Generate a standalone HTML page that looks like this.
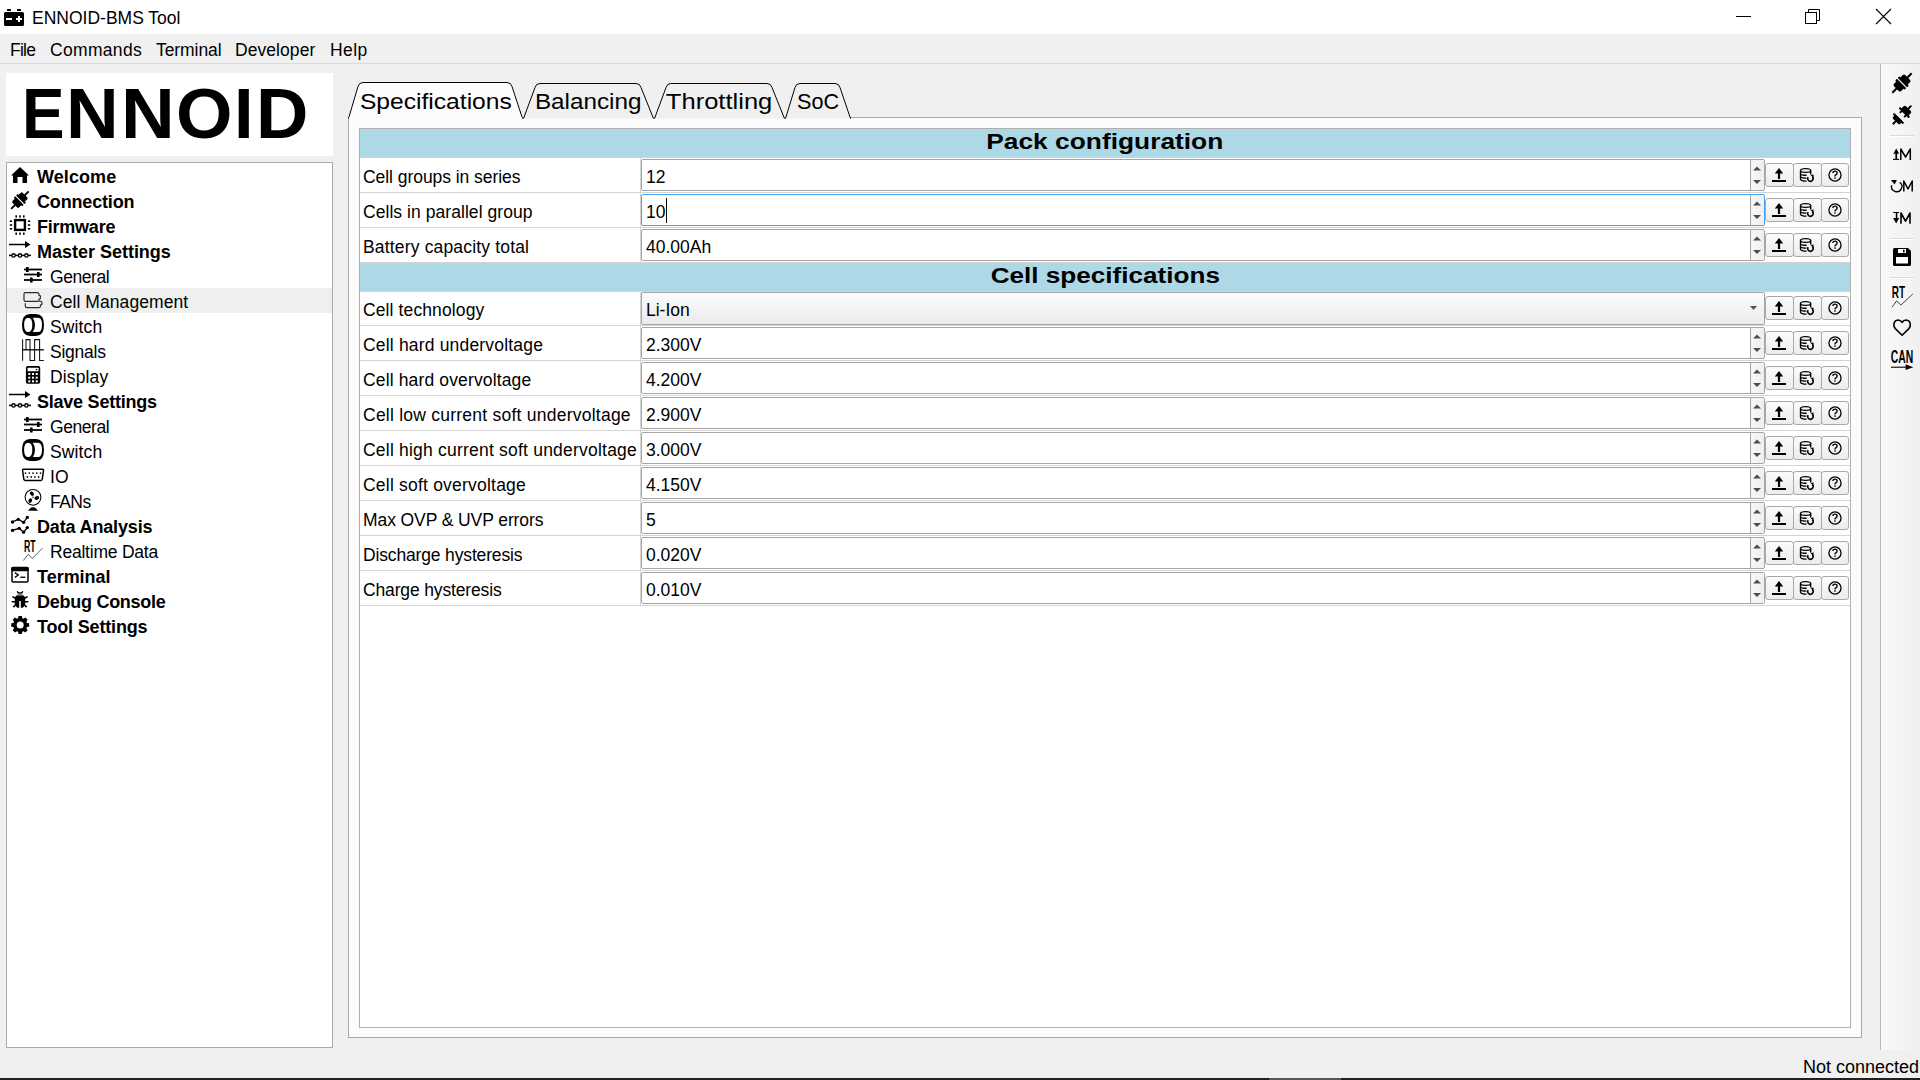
<!DOCTYPE html><html><head><meta charset="utf-8"><title>ENNOID-BMS Tool</title><style>
*{box-sizing:border-box}
html,body{margin:0;padding:0}
body{width:1920px;height:1080px;overflow:hidden;background:#f0f0f0;font-family:"Liberation Sans", sans-serif;color:#000;position:relative}
.a{position:absolute}
.t{position:absolute;white-space:pre;font-size:17.5px;line-height:20px;height:20px}
.b{font-weight:bold;font-size:18px}
svg{position:absolute;overflow:visible}
.btn{position:absolute;width:27px;height:24px;border:1px solid #a9a9a9;border-radius:3px;background:linear-gradient(#fbfbfb,#ececec)}
.spin{position:absolute;left:641px;width:1124px;height:32px;border:1px solid #a6a6a6;border-radius:2px;background:#fff}
.spinbtn{position:absolute;right:0;top:0;bottom:0;width:14px;border-left:1px solid #a6a6a6;background:linear-gradient(90deg,#f7f7f7,#efefef);border-radius:0 2px 2px 0}
.grid{position:absolute;background:#d4d4d4}
.hdr{position:absolute;left:360px;width:1490px;background:#add8e6;text-align:center;font-weight:bold;font-size:22px;letter-spacing:2px;white-space:pre}
</style></head><body>
<div class="a" style="left:0;top:0;width:1920px;height:34px;background:#fff"></div>
<svg style="left:0;top:0" width="30" height="34" viewBox="0 0 30 34">
<rect x="7" y="9" width="4" height="2" rx="0.6" fill="#000"/><rect x="17" y="9" width="4" height="2" rx="0.6" fill="#000"/>
<rect x="4" y="12" width="20" height="14" rx="1.6" fill="#000"/>
<rect x="6" y="18" width="6" height="2" fill="#fff"/><rect x="16" y="18" width="6" height="2" fill="#fff"/><rect x="18" y="16" width="2" height="6" fill="#fff"/>
</svg>
<div class="t " style="left:32px;top:8px;font-size:17.5px">ENNOID-BMS Tool</div>
<svg style="left:1700px;top:0" width="220" height="34" viewBox="1700 0 220 34">
<line x1="1736" y1="16.5" x2="1751" y2="16.5" stroke="#000" stroke-width="1"/>
<rect x="1805.5" y="12.5" width="11" height="11" fill="none" stroke="#000" stroke-width="1"/>
<path d="M1808.5 12.5 V9.5 H1819.5 V20.5 H1816.5" fill="none" stroke="#000" stroke-width="1"/>
<path d="M1876 9 L1891 24 M1891 9 L1876 24" stroke="#000" stroke-width="1.1"/>
</svg>
<div class="a" style="left:0;top:63px;width:1920px;height:1px;background:#d9d9d9"></div>
<div class="t " style="left:10px;top:40px;letter-spacing:-0.75px">File</div>
<div class="t " style="left:50px;top:40px;letter-spacing:0.32px">Commands</div>
<div class="t " style="left:156px;top:40px;letter-spacing:-0.07px">Terminal</div>
<div class="t " style="left:235px;top:40px;letter-spacing:0.06px">Developer</div>
<div class="t " style="left:330px;top:40px;letter-spacing:0.42px">Help</div>
<div class="a" style="left:6px;top:73px;width:327px;height:83px;background:#fff"></div>
<div class="a" style="left:22.20px;top:78px;font-weight:bold;font-size:71px;line-height:71px;white-space:pre;transform:scaleX(0.898);transform-origin:0 0">E</div>
<div class="a" style="left:65.77px;top:78px;font-weight:bold;font-size:71px;line-height:71px;white-space:pre;transform:scaleX(1.027);transform-origin:0 0">N</div>
<div class="a" style="left:120.56px;top:78px;font-weight:bold;font-size:71px;line-height:71px;white-space:pre;transform:scaleX(1.048);transform-origin:0 0">N</div>
<div class="a" style="left:175.83px;top:78px;font-weight:bold;font-size:71px;line-height:71px;white-space:pre;transform:scaleX(1.022);transform-origin:0 0">O</div>
<div class="a" style="left:234.15px;top:78px;font-weight:bold;font-size:71px;line-height:71px;white-space:pre;transform:scaleX(0.990);transform-origin:0 0">I</div>
<div class="a" style="left:256.20px;top:78px;font-weight:bold;font-size:71px;line-height:71px;white-space:pre;transform:scaleX(1.021);transform-origin:0 0">D</div>
<div class="a" style="left:6px;top:162px;width:327px;height:886px;border:1px solid #ababab;background:#fff"></div>
<div class="a" style="left:7px;top:288px;width:325px;height:25px;background:#efefef"></div>
<div class="t b" style="left:37px;top:167px;letter-spacing:0.083px">Welcome</div>
<div class="t b" style="left:37px;top:192px;letter-spacing:-0.167px">Connection</div>
<div class="t b" style="left:37px;top:217px;letter-spacing:-0.229px">Firmware</div>
<div class="t b" style="left:37px;top:242px;letter-spacing:-0.014px">Master Settings</div>
<div class="t " style="left:50px;top:267px;letter-spacing:-0.45px">General</div>
<div class="t " style="left:50px;top:292px;letter-spacing:0.071px">Cell Management</div>
<div class="t " style="left:50px;top:317px;letter-spacing:0.12px">Switch</div>
<div class="t " style="left:50px;top:342px;letter-spacing:-0.233px">Signals</div>
<div class="t " style="left:50px;top:367px;letter-spacing:0.133px">Display</div>
<div class="t b" style="left:37px;top:392px;letter-spacing:-0.238px">Slave Settings</div>
<div class="t " style="left:50px;top:417px;letter-spacing:-0.45px">General</div>
<div class="t " style="left:50px;top:442px;letter-spacing:0.12px">Switch</div>
<div class="t " style="left:50px;top:467px;letter-spacing:0.1px">IO</div>
<div class="t " style="left:50px;top:492px;letter-spacing:-0.533px">FANs</div>
<div class="t b" style="left:37px;top:517px;letter-spacing:-0.158px">Data Analysis</div>
<div class="t " style="left:50px;top:542px;letter-spacing:-0.225px">Realtime Data</div>
<div class="t b" style="left:37px;top:567px;letter-spacing:-0.014px">Terminal</div>
<div class="t b" style="left:37px;top:592px;letter-spacing:-0.267px">Debug Console</div>
<div class="t b" style="left:37px;top:617px;letter-spacing:-0.175px">Tool Settings</div>
<svg style="left:0;top:0" width="340" height="1080" viewBox="0 0 340 1080"><g transform="translate(0,0)"><path d="M11 175.5 L20 167 L29 175.5 L27 175.5 L27 183 L22.5 183 L22.5 177 L17.5 177 L17.5 183 L13 183 L13 175.5 Z" fill="#000"/></g><g transform="translate(0,0)"><g transform="translate(19.9,200.1) rotate(45) scale(1.0)" fill="#000"><rect x="-6" y="-2.7" width="12" height="2.1" rx="0.4"/><rect x="-4.6" y="-7.2" width="9.2" height="6" rx="1.6"/><rect x="-0.95" y="-12.4" width="1.9" height="6"/><rect x="-6" y="0.6" width="12" height="2.1" rx="0.4"/><rect x="-4.6" y="1.2" width="9.2" height="6" rx="1.6"/><rect x="-0.95" y="6.4" width="1.9" height="6"/></g></g><g transform="translate(0,0)"><rect x="15.1" y="220.1" width="9.8" height="9.8" fill="none" stroke="#000" stroke-width="2.4"/><rect x="15.399999999999999" y="215.3" width="1.6" height="2.3" fill="#000"/><rect x="15.399999999999999" y="232.5" width="1.6" height="2.3" fill="#000"/><rect x="19.2" y="215.3" width="1.6" height="2.3" fill="#000"/><rect x="19.2" y="232.5" width="1.6" height="2.3" fill="#000"/><rect x="23.0" y="215.3" width="1.6" height="2.3" fill="#000"/><rect x="23.0" y="232.5" width="1.6" height="2.3" fill="#000"/><rect x="9.8" y="220.39999999999998" width="2.3" height="1.6" fill="#000"/><rect x="27.9" y="220.39999999999998" width="2.3" height="1.6" fill="#000"/><rect x="9.8" y="224.2" width="2.3" height="1.6" fill="#000"/><rect x="27.9" y="224.2" width="2.3" height="1.6" fill="#000"/><rect x="9.8" y="228.0" width="2.3" height="1.6" fill="#000"/><rect x="27.9" y="228.0" width="2.3" height="1.6" fill="#000"/></g><g stroke="#000" fill="none" stroke-width="1.5"><path d="M9 244.5 H28"/><path d="M9 255.4 H31"/></g><path d="M25 241 L30.5 244.5 L25 248 Z" fill="#000"/><circle cx="13.55" cy="255.4" r="1.65" fill="#fff" stroke="#000" stroke-width="1.35"/><circle cx="20" cy="255.4" r="1.65" fill="#fff" stroke="#000" stroke-width="1.35"/><circle cx="26.4" cy="255.4" r="1.65" fill="#fff" stroke="#000" stroke-width="1.35"/><g transform="translate(0,0)"><g stroke="#000" stroke-width="1.8"><line x1="24" y1="269.5" x2="42" y2="269.5"/><line x1="24" y1="274.5" x2="42" y2="274.5"/><line x1="24" y1="280" x2="42" y2="280"/></g><g fill="#000"><rect x="26" y="267" width="2.6" height="5"/><rect x="37" y="272" width="2.6" height="5"/><rect x="30" y="277.5" width="2.6" height="5"/></g></g><g transform="translate(0,0)"><g fill="none" stroke="#2a2a2a" stroke-width="1.15" stroke-linejoin="round"><path d="M25.2 292.6 H37.6 Q38.6 292.6 39 293.8 V295.4 L40.4 295.9 V298.6 L39 299.1 V300.2 Q39 301.3 37.8 301.3 H25.2 Q24 301.3 24 300.1 V293.8 Q24 292.6 25.2 292.6 Z"/><path d="M39.2 300.8 L41.9 302 V304.4 L40.4 305 V306.5 Q40.2 307.6 39 307.6 H26.8 Q25.3 307.6 25.3 306.2 V303.2"/></g></g><g transform="translate(0,0)"><path d="M30 314 H36 Q44 314 44 325 Q44 336 36 336 H30 Q22 336 22 325 Q22 314 30 314 Z M28.2 317.8 Q24.1 317.8 24.1 324.9 Q24.1 332 28.2 332 Q32.3 332 32.3 324.9 Q32.3 317.8 28.2 317.8 Z M32.8 317.8 Q35 321 35 324.9 Q35 328.8 32.8 332 H38 Q42 332 42 324.9 Q42 317.8 38 317.8 Z" fill="#000" fill-rule="evenodd"/></g><g transform="translate(0,0)"><g fill="none" stroke="#111" stroke-width="1.05"><path d="M22.6 339.3 V360.8"/><path d="M26 349.8 V339.6 H30 V360.4 H34.6 V339.6 H39.6 V360.4 H43.8"/></g><path d="M22.6 349.8 H43.8" stroke="#000" stroke-width="1.3"/></g><g transform="translate(0,0)"><rect x="25.9" y="365.9" width="14.3" height="17.9" rx="1.8" fill="#000"/><rect x="27.6" y="367.7" width="11" height="3.6" rx="0.5" fill="#fff"/><circle cx="36.5" cy="369.5" r="0.8" fill="#000"/><rect x="28.3" y="373" width="2" height="2" fill="#fff"/><rect x="28.3" y="376.7" width="2" height="2" fill="#fff"/><rect x="28.3" y="380.3" width="2" height="2" fill="#fff"/><rect x="32" y="373" width="2" height="2" fill="#fff"/><rect x="32" y="376.7" width="2" height="2" fill="#fff"/><rect x="32" y="380.3" width="2" height="2" fill="#fff"/><rect x="35.7" y="373" width="2" height="2" fill="#fff"/><rect x="35.7" y="376.7" width="2" height="2" fill="#fff"/><rect x="35.7" y="380.3" width="2" height="2" fill="#fff"/></g><g stroke="#000" fill="none" stroke-width="1.5"><path d="M9 394.5 H28"/><path d="M9 405.4 H31"/></g><path d="M25 391 L30.5 394.5 L25 398 Z" fill="#000"/><circle cx="13.55" cy="405.4" r="1.65" fill="#fff" stroke="#000" stroke-width="1.35"/><circle cx="20" cy="405.4" r="1.65" fill="#fff" stroke="#000" stroke-width="1.35"/><circle cx="26.4" cy="405.4" r="1.65" fill="#fff" stroke="#000" stroke-width="1.35"/><g transform="translate(0,150)"><g stroke="#000" stroke-width="1.8"><line x1="24" y1="269.5" x2="42" y2="269.5"/><line x1="24" y1="274.5" x2="42" y2="274.5"/><line x1="24" y1="280" x2="42" y2="280"/></g><g fill="#000"><rect x="26" y="267" width="2.6" height="5"/><rect x="37" y="272" width="2.6" height="5"/><rect x="30" y="277.5" width="2.6" height="5"/></g></g><g transform="translate(0,125)"><path d="M30 314 H36 Q44 314 44 325 Q44 336 36 336 H30 Q22 336 22 325 Q22 314 30 314 Z M28.2 317.8 Q24.1 317.8 24.1 324.9 Q24.1 332 28.2 332 Q32.3 332 32.3 324.9 Q32.3 317.8 28.2 317.8 Z M32.8 317.8 Q35 321 35 324.9 Q35 328.8 32.8 332 H38 Q42 332 42 324.9 Q42 317.8 38 317.8 Z" fill="#000" fill-rule="evenodd"/></g><g transform="translate(0,0)"><path d="M23.5 469.3 H42.6 Q43.7 469.3 43.5 470.5 L42.3 479.2 Q42.1 480.4 40.9 480.4 H25.2 Q24 480.4 23.8 479.2 L22.6 470.5 Q22.4 469.3 23.5 469.3 Z" fill="none" stroke="#000" stroke-width="1.5" stroke-linejoin="round"/><circle cx="25.5" cy="473.1" r="0.85" fill="#000"/><circle cx="29.3" cy="473.1" r="0.85" fill="#000"/><circle cx="33" cy="473.1" r="0.85" fill="#000"/><circle cx="36.7" cy="473.1" r="0.85" fill="#000"/><circle cx="40.5" cy="473.1" r="0.85" fill="#000"/><circle cx="27.4" cy="476.9" r="0.85" fill="#000"/><circle cx="31.2" cy="476.9" r="0.85" fill="#000"/><circle cx="34.9" cy="476.9" r="0.85" fill="#000"/><circle cx="38.6" cy="476.9" r="0.85" fill="#000"/></g><g transform="translate(0,0)"><circle cx="33" cy="497.3" r="7.9" fill="none" stroke="#000" stroke-width="1.05"/><g fill="#000"><ellipse cx="31.9" cy="493.7" rx="2.4" ry="1.8" transform="rotate(50 31.9 493.7)"/><ellipse cx="36.8" cy="498" rx="2.4" ry="1.75" transform="rotate(-20 36.8 498)"/><ellipse cx="30.3" cy="500.6" rx="2.4" ry="1.75" transform="rotate(-65 30.3 500.6)"/><circle cx="33" cy="497.3" r="0.7"/><path d="M28 510.7 L30 508.4 Q31 507.2 33 507.2 Q35 507.2 36 508.4 L38 510.7 Z"/></g></g><g transform="translate(0,0)"><g fill="none" stroke="#000" stroke-width="1.3"><path d="M12.5 522 L18.3 519.3 L23.6 522.3 L27.3 517.4"/><path d="M12.5 530.4 L19.2 528.3 L23.6 532.2 L27.3 527.6"/></g><g fill="#000"><circle cx="12.5" cy="522" r="1.65"/><circle cx="18.3" cy="519.3" r="1.65"/><circle cx="23.6" cy="522.3" r="1.65"/><circle cx="27.3" cy="517.4" r="1.65"/><circle cx="12.5" cy="530.4" r="1.65"/><circle cx="19.2" cy="528.3" r="1.65"/><circle cx="23.6" cy="532.2" r="1.65"/><circle cx="27.3" cy="527.6" r="1.65"/></g></g><g transform="translate(0,0)"><text x="24" y="552" font-family="Liberation Sans" font-weight="bold" font-size="16" textLength="11.6" lengthAdjust="spacingAndGlyphs" fill="#000">RT</text><path d="M23.3 560.6 L28.3 554.2 L32.1 558.5 L42.6 548.2" fill="none" stroke="#333" stroke-width="0.75"/></g><g transform="translate(0,0)"><rect x="12" y="567.6" width="16" height="14.4" rx="1.2" fill="none" stroke="#000" stroke-width="1.5"/><rect x="11.3" y="567" width="17.4" height="4.2" rx="1.2" fill="#000"/><path d="M14.9 572.6 L18.3 575 L14.9 577.4" fill="none" stroke="#000" stroke-width="1.3"/><rect x="20.2" y="576.6" width="5.2" height="1.3" fill="#000"/></g><g transform="translate(0,0)"><g fill="#000"><path d="M16.7 591.5 Q17.3 590.6 17.9 591.3 L18.4 592.1 Q20 592.5 21.6 592.1 L22.1 591.3 Q22.7 590.6 23.3 591.5 L23.1 592.3 L21.9 593.8 H18.1 L16.9 592.3 Z"/><rect x="17.4" y="593.8" width="5.2" height="1.8" fill="#8a8a8a"/><path d="M16.3 595.6 H23.7 L25.2 597.6 V605.3 L22.6 607.7 H20.8 V600.9 H19.2 V607.7 H17.4 L14.8 605.3 V597.6 Z"/></g><g stroke="#000" stroke-width="1.5" stroke-linecap="round" fill="none"><path d="M15.2 598.2 L12.9 596.8"/><path d="M24.8 598.2 L27.1 596.8"/><path d="M14.9 601.8 H12.2"/><path d="M25.1 601.8 H27.8"/><path d="M15.2 605.2 L13.8 606.6"/><path d="M24.8 605.2 L26.2 606.6"/></g></g><g transform="translate(0,0)"><path d="M26.88 622.90 L29.15 623.35 L29.15 626.65 L26.88 627.10 L26.41 628.24 L27.70 630.16 L25.36 632.50 L23.44 631.21 L22.30 631.68 L21.85 633.95 L18.55 633.95 L18.10 631.68 L16.96 631.21 L15.04 632.50 L12.70 630.16 L13.99 628.24 L13.52 627.10 L11.25 626.65 L11.25 623.35 L13.52 622.90 L13.99 621.76 L12.70 619.84 L15.04 617.50 L16.96 618.79 L18.10 618.32 L18.55 616.05 L21.85 616.05 L22.30 618.32 L23.44 618.79 L25.36 617.50 L27.70 619.84 L26.41 621.76 Z M23.7 625 A3.5 3.5 0 1 0 16.7 625 A3.5 3.5 0 1 0 23.7 625 Z" fill="#000" fill-rule="evenodd"/></g></svg>
<div class="a" style="left:348px;top:117px;width:1514px;height:921px;border:1px solid #a9a9a9;background:#fcfcfc"></div>
<svg style="left:0;top:0" width="1920" height="130" viewBox="0 0 1920 130"><path d="M348.5 118.6 L358 86.5 Q359 82.5 363 82.5 L507 82.5 Q511 82.5 512 86.5 L522.5 118.6 Z" fill="#fcfcfc" stroke="none"/><path d="M348.5 118.6 L358 86.5 Q359 82.5 363 82.5 L507 82.5 Q511 82.5 512 86.5 L522.5 118.6" fill="none" stroke="#000" stroke-width="1"/><path d="M523.5 118.6 L535 87.5 Q536 83.5 540 83.5 L636 83.5 Q640 83.5 641 87.5 L653.5 118.6 Z" fill="#f0f0f0" stroke="none"/><path d="M523.5 118.6 L535 87.5 Q536 83.5 540 83.5 L636 83.5 Q640 83.5 641 87.5 L653.5 118.6" fill="none" stroke="#000" stroke-width="1"/><path d="M654.5 118.6 L666 87.5 Q667 83.5 671 83.5 L767 83.5 Q771 83.5 772 87.5 L784.5 118.6 Z" fill="#f0f0f0" stroke="none"/><path d="M654.5 118.6 L666 87.5 Q667 83.5 671 83.5 L767 83.5 Q771 83.5 772 87.5 L784.5 118.6" fill="none" stroke="#000" stroke-width="1"/><path d="M785.5 118.6 L795 87.5 Q796 83.5 800 83.5 L835 83.5 Q839 83.5 840 87.5 L850.5 118.6 Z" fill="#f0f0f0" stroke="none"/><path d="M785.5 118.6 L795 87.5 Q796 83.5 800 83.5 L835 83.5 Q839 83.5 840 87.5 L850.5 118.6" fill="none" stroke="#000" stroke-width="1"/><rect x="349" y="117" width="173" height="2" fill="#fcfcfc"/></svg>
<div class="a" style="left:359.5px;top:89px;font-size:22.8px;line-height:24px;white-space:pre;transform:scaleX(1.08);transform-origin:1.3px 0">Specifications</div>
<div class="a" style="left:534.7px;top:89px;font-size:22.8px;line-height:24px;white-space:pre;transform:scaleX(1.064);transform-origin:1.3px 0">Balancing</div>
<div class="a" style="left:665.7px;top:89px;font-size:22.8px;line-height:24px;white-space:pre;transform:scaleX(1.12);transform-origin:1.3px 0">Throttling</div>
<div class="a" style="left:796.8000000000001px;top:89px;font-size:22.8px;line-height:24px;white-space:pre;transform:scaleX(0.95);transform-origin:1.3px 0">SoC</div>
<div class="a" style="left:359px;top:128px;width:1492px;height:900px;border:1px solid #b0b0b0;background:#fff"></div>
<div class="hdr" style="top:129px;height:28px;line-height:25px;font-size:22.4px;letter-spacing:0"><span style="display:inline-block;transform:scaleX(1.176)">Pack configuration</span></div>
<div class="grid" style="left:360px;top:157px;width:1490px;height:1px"></div>
<div class="grid" style="left:360px;top:192px;width:1490px;height:1px"></div>
<div class="grid" style="left:640px;top:158px;width:1px;height:34px"></div>
<div class="spin" style="top:159px;height:32px;border-color:#a6a6a6"><div class="spinbtn" style="border-left-color:#a6a6a6"></div></div>
<div class="t " style="left:363px;top:167px;letter-spacing:-0.05px">Cell groups in series</div>
<div class="t " style="left:646px;top:167px;">12</div>
<div class="btn" style="left:1765px;top:163px;width:29px"></div><div class="btn" style="left:1793px;top:163px;width:29px"></div><div class="btn" style="left:1821px;top:163px;width:28px"></div>
<div class="grid" style="left:360px;top:227px;width:1490px;height:1px"></div>
<div class="grid" style="left:640px;top:193px;width:1px;height:34px"></div>
<div class="spin" style="top:194px;height:32px;border-color:#42a2f6"><div class="spinbtn" style="border-left-color:#a6a6a6"></div></div>
<div class="t " style="left:363px;top:202px;letter-spacing:0.055px">Cells in parallel group</div>
<div class="t " style="left:646px;top:202px;">10</div>
<div class="btn" style="left:1765px;top:198px;width:29px"></div><div class="btn" style="left:1793px;top:198px;width:29px"></div><div class="btn" style="left:1821px;top:198px;width:28px"></div>
<div class="grid" style="left:360px;top:262px;width:1490px;height:1px"></div>
<div class="grid" style="left:640px;top:228px;width:1px;height:34px"></div>
<div class="spin" style="top:229px;height:32px;border-color:#a6a6a6"><div class="spinbtn" style="border-left-color:#a6a6a6"></div></div>
<div class="t " style="left:363px;top:237px;letter-spacing:0.167px">Battery capacity total</div>
<div class="t " style="left:646px;top:237px;">40.00Ah</div>
<div class="btn" style="left:1765px;top:233px;width:29px"></div><div class="btn" style="left:1793px;top:233px;width:29px"></div><div class="btn" style="left:1821px;top:233px;width:28px"></div>
<div class="a" style="left:666px;top:198px;width:1px;height:25px;background:#000"></div>
<div class="hdr" style="top:263px;height:28px;line-height:25px;font-size:22.4px;letter-spacing:0"><span style="display:inline-block;transform:scaleX(1.166)">Cell specifications</span></div>
<div class="grid" style="left:360px;top:291px;width:1490px;height:1px"></div>
<div class="grid" style="left:360px;top:325px;width:1490px;height:1px"></div>
<div class="grid" style="left:640px;top:292px;width:1px;height:33px"></div>
<div class="spin" style="top:292px;height:33px;background:linear-gradient(#fbfbfb,#ebebeb);border-color:#a6a6a6"></div>
<div class="t " style="left:646px;top:300px;">Li-Ion</div>
<div class="t " style="left:363px;top:300px;letter-spacing:0.114px">Cell technology</div>
<div class="btn" style="left:1765px;top:296px;width:29px"></div><div class="btn" style="left:1793px;top:296px;width:29px"></div><div class="btn" style="left:1821px;top:296px;width:28px"></div>
<div class="grid" style="left:360px;top:360px;width:1490px;height:1px"></div>
<div class="grid" style="left:640px;top:326px;width:1px;height:34px"></div>
<div class="spin" style="top:327px;height:32px"><div class="spinbtn"></div></div>
<div class="t " style="left:646px;top:335px;">2.300V</div>
<div class="t " style="left:363px;top:335px;letter-spacing:0.181px">Cell hard undervoltage</div>
<div class="btn" style="left:1765px;top:331px;width:29px"></div><div class="btn" style="left:1793px;top:331px;width:29px"></div><div class="btn" style="left:1821px;top:331px;width:28px"></div>
<div class="grid" style="left:360px;top:395px;width:1490px;height:1px"></div>
<div class="grid" style="left:640px;top:361px;width:1px;height:34px"></div>
<div class="spin" style="top:362px;height:32px"><div class="spinbtn"></div></div>
<div class="t " style="left:646px;top:370px;">4.200V</div>
<div class="t " style="left:363px;top:370px;letter-spacing:0.14px">Cell hard overvoltage</div>
<div class="btn" style="left:1765px;top:366px;width:29px"></div><div class="btn" style="left:1793px;top:366px;width:29px"></div><div class="btn" style="left:1821px;top:366px;width:28px"></div>
<div class="grid" style="left:360px;top:430px;width:1490px;height:1px"></div>
<div class="grid" style="left:640px;top:396px;width:1px;height:34px"></div>
<div class="spin" style="top:397px;height:32px"><div class="spinbtn"></div></div>
<div class="t " style="left:646px;top:405px;">2.900V</div>
<div class="t " style="left:363px;top:405px;letter-spacing:0.239px">Cell low current soft undervoltage</div>
<div class="btn" style="left:1765px;top:401px;width:29px"></div><div class="btn" style="left:1793px;top:401px;width:29px"></div><div class="btn" style="left:1821px;top:401px;width:28px"></div>
<div class="grid" style="left:360px;top:465px;width:1490px;height:1px"></div>
<div class="grid" style="left:640px;top:431px;width:1px;height:34px"></div>
<div class="spin" style="top:432px;height:32px"><div class="spinbtn"></div></div>
<div class="t " style="left:646px;top:440px;">3.000V</div>
<div class="t " style="left:363px;top:440px;letter-spacing:0.212px">Cell high current soft undervoltage</div>
<div class="btn" style="left:1765px;top:436px;width:29px"></div><div class="btn" style="left:1793px;top:436px;width:29px"></div><div class="btn" style="left:1821px;top:436px;width:28px"></div>
<div class="grid" style="left:360px;top:500px;width:1490px;height:1px"></div>
<div class="grid" style="left:640px;top:466px;width:1px;height:34px"></div>
<div class="spin" style="top:467px;height:32px"><div class="spinbtn"></div></div>
<div class="t " style="left:646px;top:475px;">4.150V</div>
<div class="t " style="left:363px;top:475px;letter-spacing:0.21px">Cell soft overvoltage</div>
<div class="btn" style="left:1765px;top:471px;width:29px"></div><div class="btn" style="left:1793px;top:471px;width:29px"></div><div class="btn" style="left:1821px;top:471px;width:28px"></div>
<div class="grid" style="left:360px;top:535px;width:1490px;height:1px"></div>
<div class="grid" style="left:640px;top:501px;width:1px;height:34px"></div>
<div class="spin" style="top:502px;height:32px"><div class="spinbtn"></div></div>
<div class="t " style="left:646px;top:510px;">5</div>
<div class="t " style="left:363px;top:510px;letter-spacing:-0.089px">Max OVP &amp; UVP errors</div>
<div class="btn" style="left:1765px;top:506px;width:29px"></div><div class="btn" style="left:1793px;top:506px;width:29px"></div><div class="btn" style="left:1821px;top:506px;width:28px"></div>
<div class="grid" style="left:360px;top:570px;width:1490px;height:1px"></div>
<div class="grid" style="left:640px;top:536px;width:1px;height:34px"></div>
<div class="spin" style="top:537px;height:32px"><div class="spinbtn"></div></div>
<div class="t " style="left:646px;top:545px;">0.020V</div>
<div class="t " style="left:363px;top:545px;letter-spacing:-0.153px">Discharge hysteresis</div>
<div class="btn" style="left:1765px;top:541px;width:29px"></div><div class="btn" style="left:1793px;top:541px;width:29px"></div><div class="btn" style="left:1821px;top:541px;width:28px"></div>
<div class="grid" style="left:360px;top:605px;width:1490px;height:1px"></div>
<div class="grid" style="left:640px;top:571px;width:1px;height:34px"></div>
<div class="spin" style="top:572px;height:32px"><div class="spinbtn"></div></div>
<div class="t " style="left:646px;top:580px;">0.010V</div>
<div class="t " style="left:363px;top:580px;letter-spacing:-0.15px">Charge hysteresis</div>
<div class="btn" style="left:1765px;top:576px;width:29px"></div><div class="btn" style="left:1793px;top:576px;width:29px"></div><div class="btn" style="left:1821px;top:576px;width:28px"></div>
<svg style="left:0;top:0" width="1920" height="700" viewBox="0 0 1920 700"><path d="M1779 168.1 L1783.2 173.5 L1780.1 173.5 L1780.1 179.1 L1777.9 179.1 L1777.9 173.5 L1774.8 173.5 Z" fill="#000"/><rect x="1772" y="180.0" width="14" height="2" fill="#000"/><g fill="none" stroke="#000" stroke-width="1.35"><ellipse cx="1805.6" cy="170.50" rx="5.1" ry="1.85"/><path d="M1800.5 170.50 V179.00 Q1800.5 181.10 1806.6 181.20"/><path d="M1810.7 170.50 V174.60"/><path d="M1800.5 173.90 Q1801 175.20 1806.6 175.20"/><path d="M1800.5 176.80 Q1801 178.10 1806.4 178.10"/></g><path d="M1808.1 177.20 A2.7 2.7 0 1 0 1812.3 176.60" fill="none" stroke="#000" stroke-width="1.5"/><path d="M1810.5 174.90 L1813.6 174.60 L1813.4 177.70 Z" fill="#000"/><circle cx="1835" cy="175.0" r="6.05" fill="none" stroke="#000" stroke-width="1.3"/><path d="M1832.9 173.1 Q1832.9 171.1 1835 171.1 Q1837.1 171.1 1837.1 173.0 Q1837.1 174.2 1835.8 174.8 Q1835 175.2 1835 176.4" fill="none" stroke="#000" stroke-width="1.35"/><rect x="1834.3" y="177.4" width="1.4" height="1.4" fill="#000"/><path d="M1753 170.5 L1757 166.5 L1761 170.5 Z" fill="#4d4d4d"/><path d="M1753 180 L1757 184 L1761 180 Z" fill="#4d4d4d"/><path d="M1779 203.1 L1783.2 208.5 L1780.1 208.5 L1780.1 214.1 L1777.9 214.1 L1777.9 208.5 L1774.8 208.5 Z" fill="#000"/><rect x="1772" y="215.0" width="14" height="2" fill="#000"/><g fill="none" stroke="#000" stroke-width="1.35"><ellipse cx="1805.6" cy="205.50" rx="5.1" ry="1.85"/><path d="M1800.5 205.50 V214.00 Q1800.5 216.10 1806.6 216.20"/><path d="M1810.7 205.50 V209.60"/><path d="M1800.5 208.90 Q1801 210.20 1806.6 210.20"/><path d="M1800.5 211.80 Q1801 213.10 1806.4 213.10"/></g><path d="M1808.1 212.20 A2.7 2.7 0 1 0 1812.3 211.60" fill="none" stroke="#000" stroke-width="1.5"/><path d="M1810.5 209.90 L1813.6 209.60 L1813.4 212.70 Z" fill="#000"/><circle cx="1835" cy="210.0" r="6.05" fill="none" stroke="#000" stroke-width="1.3"/><path d="M1832.9 208.1 Q1832.9 206.1 1835 206.1 Q1837.1 206.1 1837.1 208.0 Q1837.1 209.2 1835.8 209.8 Q1835 210.2 1835 211.4" fill="none" stroke="#000" stroke-width="1.35"/><rect x="1834.3" y="212.4" width="1.4" height="1.4" fill="#000"/><path d="M1753 205.5 L1757 201.5 L1761 205.5 Z" fill="#4d4d4d"/><path d="M1753 215 L1757 219 L1761 215 Z" fill="#4d4d4d"/><path d="M1779 238.1 L1783.2 243.5 L1780.1 243.5 L1780.1 249.1 L1777.9 249.1 L1777.9 243.5 L1774.8 243.5 Z" fill="#000"/><rect x="1772" y="250.0" width="14" height="2" fill="#000"/><g fill="none" stroke="#000" stroke-width="1.35"><ellipse cx="1805.6" cy="240.50" rx="5.1" ry="1.85"/><path d="M1800.5 240.50 V249.00 Q1800.5 251.10 1806.6 251.20"/><path d="M1810.7 240.50 V244.60"/><path d="M1800.5 243.90 Q1801 245.20 1806.6 245.20"/><path d="M1800.5 246.80 Q1801 248.10 1806.4 248.10"/></g><path d="M1808.1 247.20 A2.7 2.7 0 1 0 1812.3 246.60" fill="none" stroke="#000" stroke-width="1.5"/><path d="M1810.5 244.90 L1813.6 244.60 L1813.4 247.70 Z" fill="#000"/><circle cx="1835" cy="245.0" r="6.05" fill="none" stroke="#000" stroke-width="1.3"/><path d="M1832.9 243.1 Q1832.9 241.1 1835 241.1 Q1837.1 241.1 1837.1 243.0 Q1837.1 244.2 1835.8 244.8 Q1835 245.2 1835 246.4" fill="none" stroke="#000" stroke-width="1.35"/><rect x="1834.3" y="247.4" width="1.4" height="1.4" fill="#000"/><path d="M1753 240.5 L1757 236.5 L1761 240.5 Z" fill="#4d4d4d"/><path d="M1753 250 L1757 254 L1761 250 Z" fill="#4d4d4d"/><path d="M1750 306 L1757 306 L1753.5 310 Z" fill="#555"/><path d="M1779 301.1 L1783.2 306.5 L1780.1 306.5 L1780.1 312.1 L1777.9 312.1 L1777.9 306.5 L1774.8 306.5 Z" fill="#000"/><rect x="1772" y="313.0" width="14" height="2" fill="#000"/><g fill="none" stroke="#000" stroke-width="1.35"><ellipse cx="1805.6" cy="303.50" rx="5.1" ry="1.85"/><path d="M1800.5 303.50 V312.00 Q1800.5 314.10 1806.6 314.20"/><path d="M1810.7 303.50 V307.60"/><path d="M1800.5 306.90 Q1801 308.20 1806.6 308.20"/><path d="M1800.5 309.80 Q1801 311.10 1806.4 311.10"/></g><path d="M1808.1 310.20 A2.7 2.7 0 1 0 1812.3 309.60" fill="none" stroke="#000" stroke-width="1.5"/><path d="M1810.5 307.90 L1813.6 307.60 L1813.4 310.70 Z" fill="#000"/><circle cx="1835" cy="308.0" r="6.05" fill="none" stroke="#000" stroke-width="1.3"/><path d="M1832.9 306.1 Q1832.9 304.1 1835 304.1 Q1837.1 304.1 1837.1 306.0 Q1837.1 307.2 1835.8 307.8 Q1835 308.2 1835 309.4" fill="none" stroke="#000" stroke-width="1.35"/><rect x="1834.3" y="310.4" width="1.4" height="1.4" fill="#000"/><path d="M1753 338.5 L1757 334.5 L1761 338.5 Z" fill="#4d4d4d"/><path d="M1753 348 L1757 352 L1761 348 Z" fill="#4d4d4d"/><path d="M1779 336.1 L1783.2 341.5 L1780.1 341.5 L1780.1 347.1 L1777.9 347.1 L1777.9 341.5 L1774.8 341.5 Z" fill="#000"/><rect x="1772" y="348.0" width="14" height="2" fill="#000"/><g fill="none" stroke="#000" stroke-width="1.35"><ellipse cx="1805.6" cy="338.50" rx="5.1" ry="1.85"/><path d="M1800.5 338.50 V347.00 Q1800.5 349.10 1806.6 349.20"/><path d="M1810.7 338.50 V342.60"/><path d="M1800.5 341.90 Q1801 343.20 1806.6 343.20"/><path d="M1800.5 344.80 Q1801 346.10 1806.4 346.10"/></g><path d="M1808.1 345.20 A2.7 2.7 0 1 0 1812.3 344.60" fill="none" stroke="#000" stroke-width="1.5"/><path d="M1810.5 342.90 L1813.6 342.60 L1813.4 345.70 Z" fill="#000"/><circle cx="1835" cy="343.0" r="6.05" fill="none" stroke="#000" stroke-width="1.3"/><path d="M1832.9 341.1 Q1832.9 339.1 1835 339.1 Q1837.1 339.1 1837.1 341.0 Q1837.1 342.2 1835.8 342.8 Q1835 343.2 1835 344.4" fill="none" stroke="#000" stroke-width="1.35"/><rect x="1834.3" y="345.4" width="1.4" height="1.4" fill="#000"/><path d="M1753 373.5 L1757 369.5 L1761 373.5 Z" fill="#4d4d4d"/><path d="M1753 383 L1757 387 L1761 383 Z" fill="#4d4d4d"/><path d="M1779 371.1 L1783.2 376.5 L1780.1 376.5 L1780.1 382.1 L1777.9 382.1 L1777.9 376.5 L1774.8 376.5 Z" fill="#000"/><rect x="1772" y="383.0" width="14" height="2" fill="#000"/><g fill="none" stroke="#000" stroke-width="1.35"><ellipse cx="1805.6" cy="373.50" rx="5.1" ry="1.85"/><path d="M1800.5 373.50 V382.00 Q1800.5 384.10 1806.6 384.20"/><path d="M1810.7 373.50 V377.60"/><path d="M1800.5 376.90 Q1801 378.20 1806.6 378.20"/><path d="M1800.5 379.80 Q1801 381.10 1806.4 381.10"/></g><path d="M1808.1 380.20 A2.7 2.7 0 1 0 1812.3 379.60" fill="none" stroke="#000" stroke-width="1.5"/><path d="M1810.5 377.90 L1813.6 377.60 L1813.4 380.70 Z" fill="#000"/><circle cx="1835" cy="378.0" r="6.05" fill="none" stroke="#000" stroke-width="1.3"/><path d="M1832.9 376.1 Q1832.9 374.1 1835 374.1 Q1837.1 374.1 1837.1 376.0 Q1837.1 377.2 1835.8 377.8 Q1835 378.2 1835 379.4" fill="none" stroke="#000" stroke-width="1.35"/><rect x="1834.3" y="380.4" width="1.4" height="1.4" fill="#000"/><path d="M1753 408.5 L1757 404.5 L1761 408.5 Z" fill="#4d4d4d"/><path d="M1753 418 L1757 422 L1761 418 Z" fill="#4d4d4d"/><path d="M1779 406.1 L1783.2 411.5 L1780.1 411.5 L1780.1 417.1 L1777.9 417.1 L1777.9 411.5 L1774.8 411.5 Z" fill="#000"/><rect x="1772" y="418.0" width="14" height="2" fill="#000"/><g fill="none" stroke="#000" stroke-width="1.35"><ellipse cx="1805.6" cy="408.50" rx="5.1" ry="1.85"/><path d="M1800.5 408.50 V417.00 Q1800.5 419.10 1806.6 419.20"/><path d="M1810.7 408.50 V412.60"/><path d="M1800.5 411.90 Q1801 413.20 1806.6 413.20"/><path d="M1800.5 414.80 Q1801 416.10 1806.4 416.10"/></g><path d="M1808.1 415.20 A2.7 2.7 0 1 0 1812.3 414.60" fill="none" stroke="#000" stroke-width="1.5"/><path d="M1810.5 412.90 L1813.6 412.60 L1813.4 415.70 Z" fill="#000"/><circle cx="1835" cy="413.0" r="6.05" fill="none" stroke="#000" stroke-width="1.3"/><path d="M1832.9 411.1 Q1832.9 409.1 1835 409.1 Q1837.1 409.1 1837.1 411.0 Q1837.1 412.2 1835.8 412.8 Q1835 413.2 1835 414.4" fill="none" stroke="#000" stroke-width="1.35"/><rect x="1834.3" y="415.4" width="1.4" height="1.4" fill="#000"/><path d="M1753 443.5 L1757 439.5 L1761 443.5 Z" fill="#4d4d4d"/><path d="M1753 453 L1757 457 L1761 453 Z" fill="#4d4d4d"/><path d="M1779 441.1 L1783.2 446.5 L1780.1 446.5 L1780.1 452.1 L1777.9 452.1 L1777.9 446.5 L1774.8 446.5 Z" fill="#000"/><rect x="1772" y="453.0" width="14" height="2" fill="#000"/><g fill="none" stroke="#000" stroke-width="1.35"><ellipse cx="1805.6" cy="443.50" rx="5.1" ry="1.85"/><path d="M1800.5 443.50 V452.00 Q1800.5 454.10 1806.6 454.20"/><path d="M1810.7 443.50 V447.60"/><path d="M1800.5 446.90 Q1801 448.20 1806.6 448.20"/><path d="M1800.5 449.80 Q1801 451.10 1806.4 451.10"/></g><path d="M1808.1 450.20 A2.7 2.7 0 1 0 1812.3 449.60" fill="none" stroke="#000" stroke-width="1.5"/><path d="M1810.5 447.90 L1813.6 447.60 L1813.4 450.70 Z" fill="#000"/><circle cx="1835" cy="448.0" r="6.05" fill="none" stroke="#000" stroke-width="1.3"/><path d="M1832.9 446.1 Q1832.9 444.1 1835 444.1 Q1837.1 444.1 1837.1 446.0 Q1837.1 447.2 1835.8 447.8 Q1835 448.2 1835 449.4" fill="none" stroke="#000" stroke-width="1.35"/><rect x="1834.3" y="450.4" width="1.4" height="1.4" fill="#000"/><path d="M1753 478.5 L1757 474.5 L1761 478.5 Z" fill="#4d4d4d"/><path d="M1753 488 L1757 492 L1761 488 Z" fill="#4d4d4d"/><path d="M1779 476.1 L1783.2 481.5 L1780.1 481.5 L1780.1 487.1 L1777.9 487.1 L1777.9 481.5 L1774.8 481.5 Z" fill="#000"/><rect x="1772" y="488.0" width="14" height="2" fill="#000"/><g fill="none" stroke="#000" stroke-width="1.35"><ellipse cx="1805.6" cy="478.50" rx="5.1" ry="1.85"/><path d="M1800.5 478.50 V487.00 Q1800.5 489.10 1806.6 489.20"/><path d="M1810.7 478.50 V482.60"/><path d="M1800.5 481.90 Q1801 483.20 1806.6 483.20"/><path d="M1800.5 484.80 Q1801 486.10 1806.4 486.10"/></g><path d="M1808.1 485.20 A2.7 2.7 0 1 0 1812.3 484.60" fill="none" stroke="#000" stroke-width="1.5"/><path d="M1810.5 482.90 L1813.6 482.60 L1813.4 485.70 Z" fill="#000"/><circle cx="1835" cy="483.0" r="6.05" fill="none" stroke="#000" stroke-width="1.3"/><path d="M1832.9 481.1 Q1832.9 479.1 1835 479.1 Q1837.1 479.1 1837.1 481.0 Q1837.1 482.2 1835.8 482.8 Q1835 483.2 1835 484.4" fill="none" stroke="#000" stroke-width="1.35"/><rect x="1834.3" y="485.4" width="1.4" height="1.4" fill="#000"/><path d="M1753 513.5 L1757 509.5 L1761 513.5 Z" fill="#4d4d4d"/><path d="M1753 523 L1757 527 L1761 523 Z" fill="#4d4d4d"/><path d="M1779 511.1 L1783.2 516.5 L1780.1 516.5 L1780.1 522.1 L1777.9 522.1 L1777.9 516.5 L1774.8 516.5 Z" fill="#000"/><rect x="1772" y="523.0" width="14" height="2" fill="#000"/><g fill="none" stroke="#000" stroke-width="1.35"><ellipse cx="1805.6" cy="513.50" rx="5.1" ry="1.85"/><path d="M1800.5 513.50 V522.00 Q1800.5 524.10 1806.6 524.20"/><path d="M1810.7 513.50 V517.60"/><path d="M1800.5 516.90 Q1801 518.20 1806.6 518.20"/><path d="M1800.5 519.80 Q1801 521.10 1806.4 521.10"/></g><path d="M1808.1 520.20 A2.7 2.7 0 1 0 1812.3 519.60" fill="none" stroke="#000" stroke-width="1.5"/><path d="M1810.5 517.90 L1813.6 517.60 L1813.4 520.70 Z" fill="#000"/><circle cx="1835" cy="518.0" r="6.05" fill="none" stroke="#000" stroke-width="1.3"/><path d="M1832.9 516.1 Q1832.9 514.1 1835 514.1 Q1837.1 514.1 1837.1 516.0 Q1837.1 517.2 1835.8 517.8 Q1835 518.2 1835 519.4" fill="none" stroke="#000" stroke-width="1.35"/><rect x="1834.3" y="520.4" width="1.4" height="1.4" fill="#000"/><path d="M1753 548.5 L1757 544.5 L1761 548.5 Z" fill="#4d4d4d"/><path d="M1753 558 L1757 562 L1761 558 Z" fill="#4d4d4d"/><path d="M1779 546.1 L1783.2 551.5 L1780.1 551.5 L1780.1 557.1 L1777.9 557.1 L1777.9 551.5 L1774.8 551.5 Z" fill="#000"/><rect x="1772" y="558.0" width="14" height="2" fill="#000"/><g fill="none" stroke="#000" stroke-width="1.35"><ellipse cx="1805.6" cy="548.50" rx="5.1" ry="1.85"/><path d="M1800.5 548.50 V557.00 Q1800.5 559.10 1806.6 559.20"/><path d="M1810.7 548.50 V552.60"/><path d="M1800.5 551.90 Q1801 553.20 1806.6 553.20"/><path d="M1800.5 554.80 Q1801 556.10 1806.4 556.10"/></g><path d="M1808.1 555.20 A2.7 2.7 0 1 0 1812.3 554.60" fill="none" stroke="#000" stroke-width="1.5"/><path d="M1810.5 552.90 L1813.6 552.60 L1813.4 555.70 Z" fill="#000"/><circle cx="1835" cy="553.0" r="6.05" fill="none" stroke="#000" stroke-width="1.3"/><path d="M1832.9 551.1 Q1832.9 549.1 1835 549.1 Q1837.1 549.1 1837.1 551.0 Q1837.1 552.2 1835.8 552.8 Q1835 553.2 1835 554.4" fill="none" stroke="#000" stroke-width="1.35"/><rect x="1834.3" y="555.4" width="1.4" height="1.4" fill="#000"/><path d="M1753 583.5 L1757 579.5 L1761 583.5 Z" fill="#4d4d4d"/><path d="M1753 593 L1757 597 L1761 593 Z" fill="#4d4d4d"/><path d="M1779 581.1 L1783.2 586.5 L1780.1 586.5 L1780.1 592.1 L1777.9 592.1 L1777.9 586.5 L1774.8 586.5 Z" fill="#000"/><rect x="1772" y="593.0" width="14" height="2" fill="#000"/><g fill="none" stroke="#000" stroke-width="1.35"><ellipse cx="1805.6" cy="583.50" rx="5.1" ry="1.85"/><path d="M1800.5 583.50 V592.00 Q1800.5 594.10 1806.6 594.20"/><path d="M1810.7 583.50 V587.60"/><path d="M1800.5 586.90 Q1801 588.20 1806.6 588.20"/><path d="M1800.5 589.80 Q1801 591.10 1806.4 591.10"/></g><path d="M1808.1 590.20 A2.7 2.7 0 1 0 1812.3 589.60" fill="none" stroke="#000" stroke-width="1.5"/><path d="M1810.5 587.90 L1813.6 587.60 L1813.4 590.70 Z" fill="#000"/><circle cx="1835" cy="588.0" r="6.05" fill="none" stroke="#000" stroke-width="1.3"/><path d="M1832.9 586.1 Q1832.9 584.1 1835 584.1 Q1837.1 584.1 1837.1 586.0 Q1837.1 587.2 1835.8 587.8 Q1835 588.2 1835 589.4" fill="none" stroke="#000" stroke-width="1.35"/><rect x="1834.3" y="590.4" width="1.4" height="1.4" fill="#000"/></svg>
<div class="a" style="left:1880px;top:64px;width:40px;height:986px;border-left:1px solid #b9b9b9;background:linear-gradient(90deg,#f9f9f9,#f0f0f0)"></div>
<svg style="left:0;top:0" width="1920" height="400" viewBox="0 0 1920 400"><g transform="translate(1902,83) rotate(45) scale(1.1)" fill="#000"><rect x="-6" y="-2.7" width="12" height="2.1" rx="0.4"/><rect x="-4.6" y="-7.2" width="9.2" height="6" rx="1.6"/><rect x="-0.95" y="-12.4" width="1.9" height="6"/><rect x="-6" y="0.6" width="12" height="2.1" rx="0.4"/><rect x="-4.6" y="1.2" width="9.2" height="6" rx="1.6"/><rect x="-0.95" y="6.4" width="1.9" height="6"/></g><g transform="translate(1902,115) rotate(45)" fill="#000"><rect x="-7" y="4" width="14" height="2" rx="0.4"/><rect x="-5" y="4" width="10" height="5" rx="1.6"/><rect x="-1" y="8" width="2" height="5"/><rect x="-7" y="-4.4" width="14" height="2" rx="0.4"/><rect x="-5" y="-9" width="10" height="5.5" rx="1.6"/><rect x="-1" y="-13.2" width="2" height="5"/><rect x="-3.9" y="-3" width="1.8" height="3"/><rect x="2.1" y="-3" width="1.8" height="3"/></g><rect x="1890" y="135" width="24" height="1" fill="#dadada"/><rect x="1890" y="136" width="24" height="1" fill="#fff"/><rect x="1890" y="238" width="24" height="1" fill="#dadada"/><rect x="1890" y="239" width="24" height="1" fill="#fff"/><rect x="1890" y="277" width="24" height="1" fill="#dadada"/><rect x="1890" y="278" width="24" height="1" fill="#fff"/><path d="M1896.25 148.5 L1899.2 153.7 L1897.1 153.7 L1897.1 159 L1895.4 159 L1895.4 153.7 L1893.3 153.7 Z" fill="#000"/><rect x="1893" y="158.8" width="6.2" height="1.1" fill="#000"/><path d="M1900.8 159.9 V149 L1905.55 157.2 L1910.3 149 V159.9" fill="none" stroke="#000" stroke-width="1.5" stroke-linejoin="round"/><path d="M1899.6 182.2 A5.2 5.2 0 1 1 1891.6 185.2" fill="none" stroke="#000" stroke-width="1.35"/><path d="M1890.9 180.1 L1896.9 180.1 L1894.6 184.6 Z" fill="#000"/><path d="M1903.8 191.5 V181 L1908 189 L1912.2 181 V191.5" fill="none" stroke="#000" stroke-width="1.5" stroke-linejoin="round"/><rect x="1893.1" y="212" width="6" height="1" fill="#000"/><rect x="1895.8" y="212.5" width="1.5" height="6" fill="#000"/><path d="M1893.1 218 L1899.2 218 L1896.15 223.4 Z" fill="#000"/><path d="M1901 223.8 V213 L1905.5 221.2 L1910 213 V223.8" fill="none" stroke="#000" stroke-width="1.6" stroke-linejoin="round"/><path d="M1894.5 248 H1908 L1911 251 V264.5 Q1911 266 1909.5 266 H1894.5 Q1893 266 1893 264.5 V249.5 Q1893 248 1894.5 248 Z" fill="#000"/><rect x="1898" y="249" width="8" height="4" fill="#fff"/><rect x="1903" y="249.8" width="1.6" height="2.6" fill="#000"/><rect x="1896" y="257" width="12" height="6.5" fill="#fff"/><text x="1891.8" y="298.3" font-family="Liberation Sans" font-weight="bold" font-size="17" textLength="13.3" lengthAdjust="spacingAndGlyphs">RT</text><path d="M1892 307.3 L1896.6 300.9 L1900.9 305.1 L1912.8 294" fill="none" stroke="#333" stroke-width="0.9"/><path d="M1902.1 335.3 L1895.3 328.6 Q1893.6 326.8 1893.9 324 Q1894.4 320.2 1898.2 320 Q1900.6 320 1902.1 322.4 Q1903.6 320 1906 320 Q1909.8 320.2 1910.3 324 Q1910.6 326.8 1908.9 328.6 Z" fill="none" stroke="#000" stroke-width="1.6" stroke-linejoin="round"/><text x="1890.8" y="362.6" font-family="Liberation Sans" font-weight="bold" font-size="17.9" textLength="22.4" lengthAdjust="spacingAndGlyphs">CAN</text><path d="M1891 367.2 H1907" stroke="#000" stroke-width="1.1"/><path d="M1905.6 364.3 L1913.3 367.2 L1905.6 370 Z" fill="#000"/></svg>
<div class="t" style="right:1px;top:1057px;text-align:right;font-size:18px">Not connected</div>
<div class="a" style="left:0;top:1078px;width:1920px;height:2px;background:#202020"></div>
<div class="a" style="left:1269px;top:1078px;width:72px;height:2px;background:#555"></div>
</body></html>
